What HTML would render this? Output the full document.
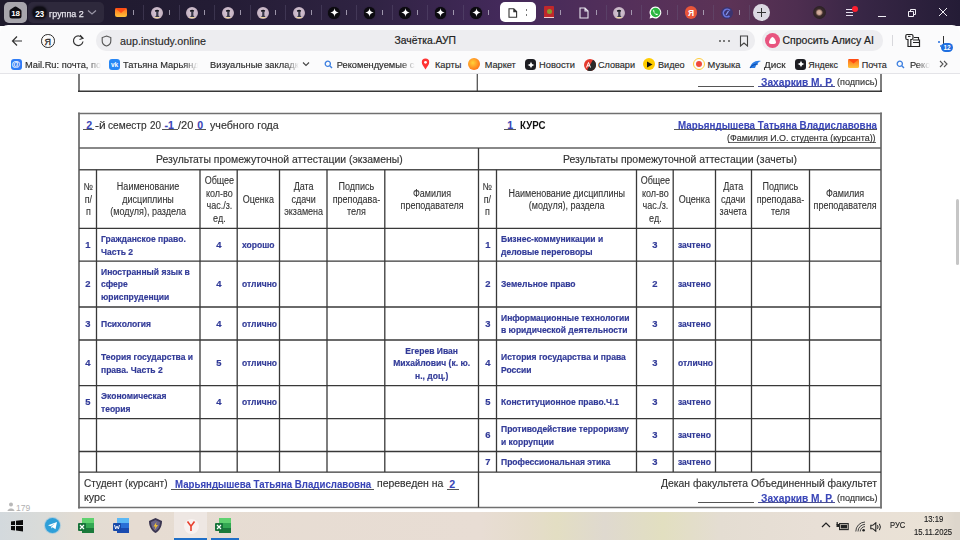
<!DOCTYPE html><html><head><meta charset="utf-8"><style>
*{margin:0;padding:0;box-sizing:border-box}
html,body{width:960px;height:540px;overflow:hidden;background:#fff;font-family:"Liberation Sans",sans-serif}
.t{position:absolute;white-space:nowrap}
.bk{-webkit-text-stroke:0.15px #333}
.r{position:absolute}
.c{position:absolute;display:flex;align-items:center;justify-content:center;text-align:center;color:#333;font-size:10px;line-height:12.6px;padding-top:2.4px;-webkit-text-stroke:0.1px #333}
.c>span{display:inline-block;transform:scaleX(0.9);white-space:nowrap}
.d{position:absolute;display:flex;align-items:center;color:#323b98;font-weight:bold;font-size:9.7px;line-height:12.65px;padding-top:1.6px;-webkit-text-stroke:0.2px #323b98}
.d>span{display:inline-block;transform:scaleX(0.88);transform-origin:0 50%;white-space:nowrap}
.d.cc>span{transform-origin:50% 50%;font-size:9.9px;transform:scaleX(0.95)}
.d.ee>span{font-size:9.7px;transform:scaleX(0.88)}
.u{text-decoration:underline;text-underline-offset:1.5px;text-decoration-thickness:1px}
svg{position:absolute}
</style></head><body>

<div class="r" style="left:0px;top:0px;width:960px;height:26px;background:linear-gradient(90deg,#1e1a2c 0%,#231c34 22%,#2f2342 38%,#43295a 52%,#55305a 66%,#5c3356 76%,#4e2e50 83%,#372645 90%,#241c36 100%);"></div>
<div class="r" style="left:4px;top:2px;width:23px;height:21px;background:#a7a5ac;border-radius:5px;"></div>
<svg style="left:9px;top:6px" width="13" height="13" viewBox="0 0 13 13"><path d="M6.5 0.6 Q7.3 0.6 8.2 1.3 L11.6 3.6 Q12.5 4.2 12.5 5.3 V10 Q12.5 12.5 10 12.5 H3 Q0.5 12.5 0.5 10 V5.3 Q0.5 4.2 1.4 3.6 L4.8 1.3 Q5.7 0.6 6.5 0.6Z" fill="#0d0c12"/></svg>
<div class="t" style="left:15.5px;top:10.33px;font-size:8px;line-height:8px;color:#fff;font-weight:bold;letter-spacing:-0.3px;transform:translateX(-50%);">18</div>
<div class="r" style="left:28px;top:2px;width:76px;height:21px;background:#2e293c;border-radius:5px;"></div>
<div class="r" style="left:33px;top:7px;width:13px;height:11px;border-radius:5px;background:#0f0e15;box-shadow:0 0 2px 1px #0f0e15"></div>
<div class="t" style="left:39.5px;top:10.07px;font-size:8.3px;line-height:8.3px;color:#fff;font-weight:bold;letter-spacing:-0.4px;transform:translateX(-50%);">23</div>
<div class="t" style="left:48.8px;top:8.80px;font-size:9.8px;line-height:9.8px;color:#e6e4ec;transform-origin:0 0;transform:scaleX(0.9119);-webkit-text-stroke:0.25px #e6e4ec;">группа 2</div>
<svg style="left:87px;top:9px" width="10" height="7" viewBox="0 0 10 7"><path d="M1 1.5 L5 5 L9 1.5" stroke="#9a96a6" stroke-width="1.2" fill="none"/></svg>
<div class="r" style="left:143px;top:5px;width:1px;height:15px;background:#6a6080;opacity:.35;"></div>
<div class="r" style="left:133px;top:10px;width:1.2px;height:5px;background:#b8b2c4;opacity:.8;"></div>
<div class="r" style="left:178.5px;top:5px;width:1px;height:15px;background:#6a6080;opacity:.35;"></div>
<div class="r" style="left:168.5px;top:10px;width:1.2px;height:5px;background:#b8b2c4;opacity:.8;"></div>
<div class="r" style="left:214px;top:5px;width:1px;height:15px;background:#6a6080;opacity:.35;"></div>
<div class="r" style="left:204px;top:10px;width:1.2px;height:5px;background:#b8b2c4;opacity:.8;"></div>
<div class="r" style="left:249.5px;top:5px;width:1px;height:15px;background:#6a6080;opacity:.35;"></div>
<div class="r" style="left:239.5px;top:10px;width:1.2px;height:5px;background:#b8b2c4;opacity:.8;"></div>
<div class="r" style="left:285px;top:5px;width:1px;height:15px;background:#6a6080;opacity:.35;"></div>
<div class="r" style="left:275px;top:10px;width:1.2px;height:5px;background:#b8b2c4;opacity:.8;"></div>
<div class="r" style="left:320.5px;top:5px;width:1px;height:15px;background:#6a6080;opacity:.35;"></div>
<div class="r" style="left:310.5px;top:10px;width:1.2px;height:5px;background:#b8b2c4;opacity:.8;"></div>
<div class="r" style="left:356px;top:5px;width:1px;height:15px;background:#6a6080;opacity:.35;"></div>
<div class="r" style="left:346px;top:10px;width:1.2px;height:5px;background:#b8b2c4;opacity:.8;"></div>
<div class="r" style="left:391.5px;top:5px;width:1px;height:15px;background:#6a6080;opacity:.35;"></div>
<div class="r" style="left:381.5px;top:10px;width:1.2px;height:5px;background:#b8b2c4;opacity:.8;"></div>
<div class="r" style="left:427px;top:5px;width:1px;height:15px;background:#6a6080;opacity:.35;"></div>
<div class="r" style="left:417px;top:10px;width:1.2px;height:5px;background:#b8b2c4;opacity:.8;"></div>
<div class="r" style="left:462.5px;top:5px;width:1px;height:15px;background:#6a6080;opacity:.35;"></div>
<div class="r" style="left:452.5px;top:10px;width:1.2px;height:5px;background:#b8b2c4;opacity:.8;"></div>
<div class="r" style="left:488px;top:10px;width:1.2px;height:5px;background:#b8b2c4;opacity:.8;"></div>
<div class="r" style="left:559.5px;top:10px;width:1.2px;height:5px;background:#b8b2c4;opacity:.8;"></div>
<div class="r" style="left:605.5px;top:5px;width:1px;height:15px;background:#6a6080;opacity:.35;"></div>
<div class="r" style="left:595.5px;top:10px;width:1.2px;height:5px;background:#b8b2c4;opacity:.8;"></div>
<div class="r" style="left:641px;top:5px;width:1px;height:15px;background:#6a6080;opacity:.35;"></div>
<div class="r" style="left:631px;top:10px;width:1.2px;height:5px;background:#b8b2c4;opacity:.8;"></div>
<div class="r" style="left:677px;top:5px;width:1px;height:15px;background:#6a6080;opacity:.35;"></div>
<div class="r" style="left:667px;top:10px;width:1.2px;height:5px;background:#b8b2c4;opacity:.8;"></div>
<div class="r" style="left:713px;top:5px;width:1px;height:15px;background:#6a6080;opacity:.35;"></div>
<div class="r" style="left:703px;top:10px;width:1.2px;height:5px;background:#b8b2c4;opacity:.8;"></div>
<div class="r" style="left:749px;top:5px;width:1px;height:15px;background:#6a6080;opacity:.35;"></div>
<div class="r" style="left:739px;top:10px;width:1.2px;height:5px;background:#b8b2c4;opacity:.8;"></div>
<div class="r" style="left:500px;top:2.3px;width:36px;height:19.7px;background:#ffffff;border-radius:5px;"></div>
<svg style="left:508px;top:8px" width="10" height="10" viewBox="0 0 10 10"><path d="M1 0.8 H5.8 L8.6 3.6 V9.2 H1 Z M5.8 0.8 V3.6 H8.6" stroke="#333" stroke-width="1.1" fill="none"/></svg>
<div class="r" style="left:525.8px;top:9px;width:1.2px;height:1.6px;background:#777;"></div>
<div class="r" style="left:525.8px;top:14px;width:1.2px;height:1.6px;background:#777;"></div>
<div class="r" style="left:115px;top:8px;width:12px;height:9px;background:linear-gradient(180deg,#ff6a1a,#ffc43b);border-radius:2px;"></div>
<svg style="left:115px;top:8px" width="12" height="9" viewBox="0 0 12 9"><path d="M0 0 L6 5 L12 0Z" fill="#ff4d14"/></svg>
<div class="r" style="left:150.5px;top:6.5px;width:12px;height:12px;border-radius:50%;background:radial-gradient(circle at 50% 45%,#d8c8d6 0,#c6b4c4 60%,#7a6070 100%)"></div>
<svg style="left:150.5px;top:6.5px" width="12" height="12" viewBox="0 0 12 12"><path d="M3.8 3.6 Q6 1.8 8.2 3.4 L7.4 5 Q6 4.3 4.6 5Z" fill="#15151c"/><path d="M5.2 4.8 H7.4 V8.5 L8.5 10 H4 L5.2 8.5Z" fill="#3a3a4a"/><path d="M3.3 10.6 H8.7" stroke="#f0d8a0" stroke-width="1.1"/></svg>
<div class="r" style="left:186px;top:6.5px;width:12px;height:12px;border-radius:50%;background:radial-gradient(circle at 50% 45%,#d8c8d6 0,#c6b4c4 60%,#7a6070 100%)"></div>
<svg style="left:186px;top:6.5px" width="12" height="12" viewBox="0 0 12 12"><path d="M3.8 3.6 Q6 1.8 8.2 3.4 L7.4 5 Q6 4.3 4.6 5Z" fill="#15151c"/><path d="M5.2 4.8 H7.4 V8.5 L8.5 10 H4 L5.2 8.5Z" fill="#3a3a4a"/><path d="M3.3 10.6 H8.7" stroke="#f0d8a0" stroke-width="1.1"/></svg>
<div class="r" style="left:221.5px;top:6.5px;width:12px;height:12px;border-radius:50%;background:radial-gradient(circle at 50% 45%,#d8c8d6 0,#c6b4c4 60%,#7a6070 100%)"></div>
<svg style="left:221.5px;top:6.5px" width="12" height="12" viewBox="0 0 12 12"><path d="M3.8 3.6 Q6 1.8 8.2 3.4 L7.4 5 Q6 4.3 4.6 5Z" fill="#15151c"/><path d="M5.2 4.8 H7.4 V8.5 L8.5 10 H4 L5.2 8.5Z" fill="#3a3a4a"/><path d="M3.3 10.6 H8.7" stroke="#f0d8a0" stroke-width="1.1"/></svg>
<div class="r" style="left:257px;top:6.5px;width:12px;height:12px;border-radius:50%;background:radial-gradient(circle at 50% 45%,#d8c8d6 0,#c6b4c4 60%,#7a6070 100%)"></div>
<svg style="left:257px;top:6.5px" width="12" height="12" viewBox="0 0 12 12"><path d="M3.8 3.6 Q6 1.8 8.2 3.4 L7.4 5 Q6 4.3 4.6 5Z" fill="#15151c"/><path d="M5.2 4.8 H7.4 V8.5 L8.5 10 H4 L5.2 8.5Z" fill="#3a3a4a"/><path d="M3.3 10.6 H8.7" stroke="#f0d8a0" stroke-width="1.1"/></svg>
<div class="r" style="left:292.5px;top:6.5px;width:12px;height:12px;border-radius:50%;background:radial-gradient(circle at 50% 45%,#d8c8d6 0,#c6b4c4 60%,#7a6070 100%)"></div>
<svg style="left:292.5px;top:6.5px" width="12" height="12" viewBox="0 0 12 12"><path d="M3.8 3.6 Q6 1.8 8.2 3.4 L7.4 5 Q6 4.3 4.6 5Z" fill="#15151c"/><path d="M5.2 4.8 H7.4 V8.5 L8.5 10 H4 L5.2 8.5Z" fill="#3a3a4a"/><path d="M3.3 10.6 H8.7" stroke="#f0d8a0" stroke-width="1.1"/></svg>
<div class="r" style="left:328.2px;top:7px;width:11.6px;height:11.6px;border-radius:50%;background:#0c0b10;box-shadow:0 0 1px #0c0b10"></div>
<svg style="left:329.5px;top:8.3px" width="9" height="9" viewBox="0 0 9 9"><path d="M4.5 0.3 Q5 4 8.7 4.5 Q5 5 4.5 8.7 Q4 5 0.3 4.5 Q4 4 4.5 0.3Z" fill="#fff"/></svg>
<div class="r" style="left:363.7px;top:7px;width:11.6px;height:11.6px;border-radius:50%;background:#0c0b10;box-shadow:0 0 1px #0c0b10"></div>
<svg style="left:365.0px;top:8.3px" width="9" height="9" viewBox="0 0 9 9"><path d="M4.5 0.3 Q5 4 8.7 4.5 Q5 5 4.5 8.7 Q4 5 0.3 4.5 Q4 4 4.5 0.3Z" fill="#fff"/></svg>
<div class="r" style="left:399.2px;top:7px;width:11.6px;height:11.6px;border-radius:50%;background:#0c0b10;box-shadow:0 0 1px #0c0b10"></div>
<svg style="left:400.5px;top:8.3px" width="9" height="9" viewBox="0 0 9 9"><path d="M4.5 0.3 Q5 4 8.7 4.5 Q5 5 4.5 8.7 Q4 5 0.3 4.5 Q4 4 4.5 0.3Z" fill="#fff"/></svg>
<div class="r" style="left:434.7px;top:7px;width:11.6px;height:11.6px;border-radius:50%;background:#0c0b10;box-shadow:0 0 1px #0c0b10"></div>
<svg style="left:436.0px;top:8.3px" width="9" height="9" viewBox="0 0 9 9"><path d="M4.5 0.3 Q5 4 8.7 4.5 Q5 5 4.5 8.7 Q4 5 0.3 4.5 Q4 4 4.5 0.3Z" fill="#fff"/></svg>
<div class="r" style="left:470.2px;top:7px;width:11.6px;height:11.6px;border-radius:50%;background:#0c0b10;box-shadow:0 0 1px #0c0b10"></div>
<svg style="left:471.5px;top:8.3px" width="9" height="9" viewBox="0 0 9 9"><path d="M4.5 0.3 Q5 4 8.7 4.5 Q5 5 4.5 8.7 Q4 5 0.3 4.5 Q4 4 4.5 0.3Z" fill="#fff"/></svg>
<div class="r" style="left:544px;top:6.3px;width:10px;height:11.5px;background:#c0282c;border-radius:1px;"></div>
<div class="r" style="left:546.5px;top:8.5px;width:5px;height:5px;background:#8a9a30;border-radius:50%;"></div>
<div class="r" style="left:544px;top:16.5px;width:10px;height:1.3px;background:#f0d0d0;"></div>
<svg style="left:578.5px;top:7px" width="10" height="12" viewBox="0 0 10 12"><path d="M1 1 H6 L9 4 V11 H1 Z M6 1 V4 H9" stroke="#e8e6ee" stroke-width="1.1" fill="none"/></svg>
<div class="r" style="left:613px;top:6.5px;width:12px;height:12px;border-radius:50%;background:radial-gradient(circle at 50% 45%,#d8c8d6 0,#c6b4c4 60%,#7a6070 100%)"></div>
<svg style="left:613px;top:6.5px" width="12" height="12" viewBox="0 0 12 12"><path d="M3.8 3.6 Q6 1.8 8.2 3.4 L7.4 5 Q6 4.3 4.6 5Z" fill="#15151c"/><path d="M5.2 4.8 H7.4 V8.5 L8.5 10 H4 L5.2 8.5Z" fill="#3a3a4a"/><path d="M3.3 10.6 H8.7" stroke="#f0d8a0" stroke-width="1.1"/></svg>
<svg style="left:648.5px;top:6px" width="13" height="13" viewBox="0 0 13 13"><path d="M6.5 0.6 A5.9 5.9 0 1 1 3.6 11.7 L0.6 12.4 L1.4 9.5 A5.9 5.9 0 0 1 6.5 0.6Z" fill="#fff"/><circle cx="6.5" cy="6.5" r="4.7" fill="#2bb741"/><path d="M4.3 3.8 Q3.8 6.8 7.2 8.9 Q8.6 9.5 9 8.3 L7.9 7.5 L7.2 8 Q5.8 7.2 5.1 5.9 L5.6 5.2 L4.9 3.9Z" fill="#fff"/></svg>
<div class="r" style="left:684.8px;top:6.2px;width:12.4px;height:12.4px;background:#e8553a;border-radius:50%;"></div>
<div class="t" style="left:691px;top:9.20px;font-size:8.5px;line-height:8.5px;color:#fff;font-weight:bold;transform:translateX(-50%);">Я</div>
<div class="r" style="left:721px;top:6.5px;width:12px;height:12px;background:#3c3470;border-radius:50%;"></div>
<svg style="left:721px;top:6.5px" width="12" height="12" viewBox="0 0 12 12"><path d="M9 3.5 A3.8 3.8 0 1 0 8.5 9" stroke="#6a78e0" stroke-width="1.6" fill="none"/><path d="M5 8 L7.5 4" stroke="#8a9af0" stroke-width="1.2"/></svg>
<div class="r" style="left:753px;top:4px;width:17px;height:17px;background:#dcd9e2;border-radius:50%;"></div>
<div class="r" style="left:757px;top:12px;width:9px;height:1.3px;background:#333;"></div>
<div class="r" style="left:760.8px;top:8px;width:1.3px;height:9px;background:#333;"></div>
<div class="r" style="left:812.5px;top:6px;width:13px;height:13px;background:radial-gradient(ellipse at 48% 50%,#d8b8a8 0,#c8a090 22%,#3a2a2a 40%,#2a2025 70%,#9a8a98 100%);border-radius:50%;"></div>
<div class="r" style="left:846px;top:9px;width:7px;height:1.2px;background:#e6e0ee;"></div>
<div class="r" style="left:846px;top:12px;width:7px;height:1.2px;background:#e6e0ee;"></div>
<div class="r" style="left:846px;top:15px;width:7px;height:1.2px;background:#e6e0ee;"></div>
<div class="r" style="left:852px;top:6px;width:6px;height:6px;background:#ff1f2f;border-radius:50%;"></div>
<div class="r" style="left:877.5px;top:15.5px;width:8px;height:1px;background:#f0eef4;"></div>
<svg style="left:907px;top:8px" width="10" height="10" viewBox="0 0 10 10"><path d="M1.5 3.5 H6.5 V8.5 H1.5 Z M3.5 3.5 V1.5 H8.5 V6.5 H6.5" stroke="#f0eef4" stroke-width="1" fill="none"/></svg>
<svg style="left:938px;top:7px" width="10" height="10" viewBox="0 0 10 10"><path d="M1 1 L9 9 M9 1 L1 9" stroke="#f0eef4" stroke-width="1" fill="none"/></svg>
<div class="r" style="left:0px;top:25px;width:960px;height:49px;background:#fbfbfc;border-radius:8px 8px 0 0;"></div>
<svg style="left:11px;top:35px" width="12" height="12" viewBox="0 0 12 12"><path d="M11 6 H1.5 M6 1.5 L1.5 6 L6 10.5" stroke="#333" stroke-width="1.2" fill="none"/></svg>
<div class="r" style="left:41px;top:34px;width:13.5px;height:13.5px;background:transparent;border-radius:50%;border:1.2px solid #2a2a2a;"></div>
<div class="t" style="left:47.8px;top:37.78px;font-size:9px;line-height:9px;color:#2a2a2a;transform:translateX(-50%);-webkit-text-stroke:0.3px #2a2a2a;">Я</div>
<svg style="left:72px;top:34px" width="13" height="13" viewBox="0 0 13 13"><path d="M10.5 4.5 A4.8 4.8 0 1 0 11 7.5" stroke="#333" stroke-width="1.2" fill="none"/><path d="M8 1.2 L11 4.3 L7.5 5.5" stroke="#333" stroke-width="1.2" fill="none"/></svg>
<div class="r" style="left:96px;top:30px;width:659px;height:21px;background:#ededf0;border-radius:10px;"></div>
<svg style="left:101px;top:35px" width="11" height="12" viewBox="0 0 11 12"><path d="M5.5 1 L9.8 2.6 V6 C9.8 8.5 7.8 10.3 5.5 11 C3.2 10.3 1.2 8.5 1.2 6 V2.6 Z" stroke="#555" stroke-width="1.1" fill="none"/></svg>
<div class="t" style="left:120px;top:35.70px;font-size:10.75px;line-height:10.75px;color:#2a2a2a;-webkit-text-stroke:0.15px #2a2a2a;">aup.instudy.online</div>
<div class="t" style="left:394.6px;top:36.06px;font-size:10.33px;line-height:10.33px;color:#222;-webkit-text-stroke:0.2px #222;">Зачётка.АУП</div>
<div class="r" style="left:719.0px;top:40px;width:2px;height:2px;background:#555;border-radius:50%;"></div>
<div class="r" style="left:723.3px;top:40px;width:2px;height:2px;background:#555;border-radius:50%;"></div>
<div class="r" style="left:727.6px;top:40px;width:2px;height:2px;background:#555;border-radius:50%;"></div>
<svg style="left:739px;top:35px" width="10" height="12" viewBox="0 0 10 12"><path d="M1.5 1 H8.5 V11 L5 8 L1.5 11 Z" stroke="#444" stroke-width="1.1" fill="none"/></svg>
<div class="r" style="left:762px;top:30px;width:121px;height:21px;background:#ededf0;border-radius:10px;"></div>
<div class="r" style="left:765px;top:33px;width:15px;height:15px;background:#e8547f;border-radius:50%;"></div>
<svg style="left:767px;top:35px" width="11" height="11" viewBox="0 0 11 11"><path d="M5.5 2 C7 2 9 6 9 7.5 C9 8.8 7.5 9 5.5 9 C3.5 9 2 8.8 2 7.5 C2 6 4 2 5.5 2Z" fill="#fff"/></svg>
<div class="t" style="left:782.5px;top:36.12px;font-size:10.49px;line-height:10.49px;color:#222;-webkit-text-stroke:0.2px #222;">Спросить Алису AI</div>
<div class="r" style="left:892px;top:35px;width:1px;height:11px;background:#d8d8dc;"></div>
<svg style="left:905px;top:33px" width="16" height="15" viewBox="0 0 16 15"><path d="M2 1.5 H6.5 Q8 1.5 8 3 V5 Q8 6.5 6.5 6.5 H5.8 V13.5 H3 V6.5 H2 Q0.8 6.5 0.8 5 V3 Q0.8 1.5 2 1.5Z" stroke="#222" stroke-width="1.2" fill="none"/><path d="M3 3.4 H5.5" stroke="#222" stroke-width="1.1"/><path d="M8 7 H14.5 V13.5 H6 M8 9.5 H14.5" stroke="#222" stroke-width="1.2" fill="none"/><path d="M9 4.5 H13.5 V7" stroke="#222" stroke-width="1.1" fill="none"/></svg>
<div class="r" style="left:942.5px;top:36px;width:1.2px;height:8px;background:#333;"></div>
<div class="r" style="left:941px;top:43px;width:12px;height:9px;background:#1f6fe0;border-radius:5px;"></div>
<div class="t" style="left:947px;top:45.30px;font-size:6.5px;line-height:6.5px;color:#fff;font-weight:bold;transform:translateX(-50%);">12</div>
<div class="r" style="left:938px;top:41px;width:1.5px;height:1.5px;background:#3a7be0;border-radius:50%;"></div>
<div class="r" style="left:940px;top:45px;width:1.5px;height:1.5px;background:#3a7be0;border-radius:50%;"></div>
<div class="r" style="left:0px;top:73px;width:960px;height:1px;background:#e4e4e8;"></div>
<div class="r" style="left:10.5px;top:58.5px;width:11px;height:11.5px;background:#2f7cf6;border-radius:3px;"></div>
<div class="t" style="left:16px;top:60.18px;font-size:9px;line-height:9px;color:#fff;font-weight:bold;transform:translateX(-50%);">@</div>
<div class="r" style="left:25px;top:56px;width:76px;height:17px;overflow:hidden;-webkit-mask-image:linear-gradient(90deg,#000 0,#000 62px,transparent 76px)"><div class="t" style="left:0;top:5.03px;font-size:9.3px;line-height:9.3px;color:#2a2a2a;-webkit-text-stroke:0.15px #2a2a2a">Mail.Ru: почта, поиск</div></div>
<div class="r" style="left:109px;top:58.5px;width:11px;height:11.5px;background:#2787f5;border-radius:3px;"></div>
<div class="t" style="left:114.5px;top:62.30px;font-size:6.5px;line-height:6.5px;color:#fff;font-weight:bold;transform:translateX(-50%);">vk</div>
<div class="r" style="left:123px;top:56px;width:75px;height:17px;overflow:hidden;-webkit-mask-image:linear-gradient(90deg,#000 0,#000 61px,transparent 75px)"><div class="t" style="left:0;top:5.03px;font-size:9.3px;line-height:9.3px;color:#2a2a2a;-webkit-text-stroke:0.15px #2a2a2a">Татьяна Марьяндышева</div></div>
<div class="r" style="left:210px;top:56px;width:89px;height:17px;overflow:hidden;-webkit-mask-image:linear-gradient(90deg,#000 0,#000 75px,transparent 89px)"><div class="t" style="left:0;top:5.03px;font-size:9.3px;line-height:9.3px;color:#2a2a2a;-webkit-text-stroke:0.15px #2a2a2a">Визуальные закладки</div></div>
<svg style="left:302px;top:61px" width="8" height="6" viewBox="0 0 8 6"><path d="M1 1.5 L4 4.5 L7 1.5" stroke="#444" stroke-width="1.1" fill="none"/></svg>
<svg style="left:324px;top:60px" width="9" height="9" viewBox="0 0 9 9"><circle cx="3.8" cy="3.8" r="2.6" stroke="#3d7fe0" stroke-width="1.3" fill="none"/><path d="M5.8 5.8 L8 8" stroke="#3d7fe0" stroke-width="1.4"/></svg>
<div class="r" style="left:336.7px;top:56px;width:78px;height:17px;overflow:hidden;-webkit-mask-image:linear-gradient(90deg,#000 0,#000 64px,transparent 78px)"><div class="t" style="left:0;top:5.03px;font-size:9.3px;line-height:9.3px;color:#2a2a2a;-webkit-text-stroke:0.15px #2a2a2a">Рекомендуемые сайты</div></div>
<svg style="left:421px;top:58px" width="9" height="12" viewBox="0 0 9 12"><path d="M4.5 11.5 C2.5 8.5 0.8 6.5 0.8 4.3 A3.7 3.7 0 0 1 8.2 4.3 C8.2 6.5 6.5 8.5 4.5 11.5Z" fill="#f33"/><circle cx="4.5" cy="4.3" r="1.4" fill="#fff"/></svg>
<div class="t" style="left:435px;top:61.09px;font-size:9.23px;line-height:9.23px;color:#2a2a2a;-webkit-text-stroke:0.15px #2a2a2a;">Карты</div>
<div class="r" style="left:468px;top:58px;width:12px;height:12px;background:radial-gradient(circle at 40% 40%,#ffd23a,#ff7a1a 70%);border-radius:50%;"></div>
<div class="t" style="left:484.7px;top:61.13px;font-size:9.18px;line-height:9.18px;color:#2a2a2a;-webkit-text-stroke:0.15px #2a2a2a;">Маркет</div>
<div class="r" style="left:525px;top:59.3px;width:11px;height:10.5px;background:#1d1d22;border-radius:3.5px;"></div>
<svg style="left:526.5px;top:60.5px" width="8" height="8" viewBox="0 0 8 8"><path d="M4 0.5 Q4.5 3.5 7.5 4 Q4.5 4.5 4 7.5 Q3.5 4.5 0.5 4 Q3.5 3.5 4 0.5Z" fill="#fff"/></svg>
<div class="t" style="left:539px;top:61.03px;font-size:9.3px;line-height:9.3px;color:#2a2a2a;-webkit-text-stroke:0.15px #2a2a2a;">Новости</div>
<div class="r" style="left:583.5px;top:58.5px;width:12px;height:12px;background:#e53a2e;border-radius:50%;"></div>
<svg style="left:583.5px;top:58.5px" width="12" height="12" viewBox="0 0 12 12"><path d="M12 6 A6 6 0 0 1 3 11.2 L9 0.8 A6 6 0 0 1 12 6Z" fill="#2a2a2a"/><path d="M2.5 8.5 L4.5 3.5 L6.5 8.5 M3.3 6.8 H5.7" stroke="#fff" stroke-width="1" fill="none"/></svg>
<div class="t" style="left:598px;top:61.20px;font-size:9.1px;line-height:9.1px;color:#2a2a2a;-webkit-text-stroke:0.15px #2a2a2a;">Словари</div>
<div class="r" style="left:643px;top:58px;width:12px;height:12px;background:#ffcc00;border-radius:50%;"></div>
<svg style="left:646px;top:61px" width="7" height="7" viewBox="0 0 7 7"><path d="M1 0.5 L6.5 3.5 L1 6.5Z" fill="#111"/></svg>
<div class="t" style="left:658px;top:61.16px;font-size:9.14px;line-height:9.14px;color:#2a2a2a;-webkit-text-stroke:0.15px #2a2a2a;">Видео</div>
<div class="r" style="left:693px;top:58px;width:12px;height:12px;background:transparent;border-radius:50%;border:1.5px solid #ffcc3a;"></div>
<div class="r" style="left:696px;top:61px;width:6px;height:6px;background:#f04a3a;border-radius:50%;"></div>
<div class="t" style="left:707.5px;top:61.00px;font-size:9.33px;line-height:9.33px;color:#2a2a2a;-webkit-text-stroke:0.15px #2a2a2a;">Музыка</div>
<svg style="left:749px;top:59px" width="13" height="10" viewBox="0 0 13 10"><path d="M1 9 C2 4 6 1 12 2 C9 3 7 6 6 9 Z" fill="#2a7be4"/><path d="M1 9 C3 6 6 5 9 5" stroke="#0b4fb0" stroke-width="1.2" fill="none"/></svg>
<div class="t" style="left:764px;top:61.03px;font-size:9.3px;line-height:9.3px;color:#2a2a2a;transform-origin:0 0;transform:scaleX(1.0637);-webkit-text-stroke:0.15px #2a2a2a;">Диск</div>
<div class="r" style="left:795px;top:58.5px;width:11px;height:11px;background:#1d1d22;border-radius:3px;"></div>
<svg style="left:796.5px;top:60px" width="8" height="8" viewBox="0 0 8 8"><path d="M4 0.5 Q4.5 3.5 7.5 4 Q4.5 4.5 4 7.5 Q3.5 4.5 0.5 4 Q3.5 3.5 4 0.5Z" fill="#fff"/></svg>
<div class="t" style="left:808.3px;top:61.43px;font-size:8.83px;line-height:8.83px;color:#2a2a2a;-webkit-text-stroke:0.15px #2a2a2a;">Яндекс</div>
<div class="r" style="left:848px;top:59px;width:11px;height:9px;background:linear-gradient(180deg,#ff6a1a,#ffc43b);border-radius:1.5px;"></div>
<svg style="left:848px;top:59px" width="11" height="9" viewBox="0 0 11 9"><path d="M0 0 L5.5 4.5 L11 0Z" fill="#ff4d14"/></svg>
<div class="t" style="left:861.7px;top:61.28px;font-size:9.0px;line-height:9.0px;color:#2a2a2a;-webkit-text-stroke:0.15px #2a2a2a;">Почта</div>
<svg style="left:896px;top:60px" width="9" height="9" viewBox="0 0 9 9"><circle cx="3.8" cy="3.8" r="2.6" stroke="#3d7fe0" stroke-width="1.3" fill="none"/><path d="M5.8 5.8 L8 8" stroke="#3d7fe0" stroke-width="1.4"/></svg>
<div class="r" style="left:910px;top:56px;width:20px;height:17px;overflow:hidden;-webkit-mask-image:linear-gradient(90deg,#000 0,#000 6px,transparent 20px)"><div class="t" style="left:0;top:5.03px;font-size:9.3px;line-height:9.3px;color:#2a2a2a;-webkit-text-stroke:0.15px #2a2a2a">Рекомендуемые</div></div>
<svg style="left:939px;top:60px" width="9" height="8" viewBox="0 0 9 8"><path d="M1 1 L4 4 L1 7 M5 1 L8 4 L5 7" stroke="#555" stroke-width="1.1" fill="none"/></svg>
<div class="r" style="left:0px;top:74px;width:960px;height:438px;background:#ffffff;"></div>
<div class="r" style="left:697.8px;top:86px;width:56.200000000000045px;height:1px;background:#555"></div>
<div class="r" style="left:758px;top:86.3px;width:77px;height:1px;background:#4a4f90"></div>
<div class="t" style="left:760.8px;top:76.83px;font-size:10.6px;line-height:10.6px;color:#3a46b8;transform-origin:0 0;transform:scaleX(0.9624);font-weight:bold;-webkit-text-stroke:0.1px #3a46b8;">Захаркив М. Р.</div>
<div class="t" style="left:836.5px;top:78.13px;font-size:9.06px;line-height:9.06px;color:#333;transform-origin:0 0;transform:scaleX(1.0054);-webkit-text-stroke:0.15px #333;">(подпись)</div>
<svg style="left:0;top:0" width="960" height="540" viewBox="0 0 960 540"><line x1="79" y1="74" x2="79" y2="92" stroke="#707070" stroke-width="1.8"/><line x1="881" y1="74" x2="881" y2="92" stroke="#707070" stroke-width="1.8"/><line x1="477.3" y1="74" x2="477.3" y2="91.3" stroke="#555" stroke-width="1.3"/><line x1="78" y1="91.3" x2="882" y2="91.3" stroke="#383838" stroke-width="1.4"/><line x1="78.1" y1="113.5" x2="881.9" y2="113.5" stroke="#707070" stroke-width="1.7"/><line x1="78.1" y1="507.5" x2="881.9" y2="507.5" stroke="#707070" stroke-width="1.7"/><line x1="79" y1="112.6" x2="79" y2="508.4" stroke="#707070" stroke-width="1.8"/><line x1="881" y1="112.6" x2="881" y2="508.4" stroke="#707070" stroke-width="1.8"/><line x1="79" y1="148" x2="881" y2="148" stroke="#606060" stroke-width="1.6"/><line x1="79" y1="169.8" x2="881" y2="169.8" stroke="#505050" stroke-width="1.6"/><line x1="79" y1="228.4" x2="881" y2="228.4" stroke="#383838" stroke-width="1.3"/><line x1="79" y1="261.2" x2="881" y2="261.2" stroke="#383838" stroke-width="1.3"/><line x1="79" y1="307.0" x2="881" y2="307.0" stroke="#383838" stroke-width="1.3"/><line x1="79" y1="340.0" x2="881" y2="340.0" stroke="#383838" stroke-width="1.3"/><line x1="79" y1="385.7" x2="881" y2="385.7" stroke="#383838" stroke-width="1.3"/><line x1="79" y1="418.6" x2="881" y2="418.6" stroke="#383838" stroke-width="1.3"/><line x1="79" y1="451.5" x2="881" y2="451.5" stroke="#383838" stroke-width="1.3"/><line x1="79" y1="472.1" x2="881" y2="472.1" stroke="#383838" stroke-width="1.3"/><line x1="478.5" y1="148" x2="478.5" y2="507.5" stroke="#383838" stroke-width="1.3"/><line x1="96.5" y1="169.8" x2="96.5" y2="472.1" stroke="#383838" stroke-width="1.3"/><line x1="200.0" y1="169.8" x2="200.0" y2="472.1" stroke="#383838" stroke-width="1.3"/><line x1="237.2" y1="169.8" x2="237.2" y2="472.1" stroke="#383838" stroke-width="1.3"/><line x1="279.5" y1="169.8" x2="279.5" y2="472.1" stroke="#383838" stroke-width="1.3"/><line x1="327.0" y1="169.8" x2="327.0" y2="472.1" stroke="#383838" stroke-width="1.3"/><line x1="384.8" y1="169.8" x2="384.8" y2="472.1" stroke="#383838" stroke-width="1.3"/><line x1="496.5" y1="169.8" x2="496.5" y2="472.1" stroke="#383838" stroke-width="1.3"/><line x1="636.5" y1="169.8" x2="636.5" y2="472.1" stroke="#383838" stroke-width="1.3"/><line x1="673.2" y1="169.8" x2="673.2" y2="472.1" stroke="#383838" stroke-width="1.3"/><line x1="715.5" y1="169.8" x2="715.5" y2="472.1" stroke="#383838" stroke-width="1.3"/><line x1="751.5" y1="169.8" x2="751.5" y2="472.1" stroke="#383838" stroke-width="1.3"/><line x1="809.5" y1="169.8" x2="809.5" y2="472.1" stroke="#383838" stroke-width="1.3"/></svg>
<div class="r" style="left:83.25px;top:129.3px;width:10.75px;height:1px;background:#555"></div>
<div class="t" style="left:86.3px;top:120.43px;font-size:10.6px;line-height:10.6px;color:#3a46b8;font-weight:bold;-webkit-text-stroke:0.1px #3a46b8;">2</div>
<div class="t" style="left:95.3px;top:120.68px;font-size:10.3px;line-height:10.3px;color:#333;transform-origin:0 0;transform:scaleX(1.1651);-webkit-text-stroke:0.15px #333;">-й</div>
<div class="t" style="left:107.6px;top:120.68px;font-size:10.3px;line-height:10.3px;color:#333;transform-origin:0 0;transform:scaleX(0.9826);-webkit-text-stroke:0.15px #333;">семестр</div>
<div class="t" style="left:149.8px;top:120.68px;font-size:10.3px;line-height:10.3px;color:#333;transform-origin:0 0;transform:scaleX(0.9601);-webkit-text-stroke:0.15px #333;">20</div>
<div class="r" style="left:162px;top:129.3px;width:16px;height:1px;background:#555"></div>
<div class="t" style="left:164.6px;top:120.43px;font-size:10.6px;line-height:10.6px;color:#3a46b8;font-weight:bold;-webkit-text-stroke:0.1px #3a46b8;">-1</div>
<div class="t" style="left:178.4px;top:120.68px;font-size:10.3px;line-height:10.3px;color:#333;transform-origin:0 0;transform:scaleX(1.0755);-webkit-text-stroke:0.15px #333;">/20</div>
<div class="r" style="left:195px;top:129.3px;width:11px;height:1px;background:#555"></div>
<div class="t" style="left:197.3px;top:120.43px;font-size:10.6px;line-height:10.6px;color:#3a46b8;font-weight:bold;-webkit-text-stroke:0.1px #3a46b8;">0</div>
<div class="t" style="left:209.8px;top:120.68px;font-size:10.3px;line-height:10.3px;color:#333;transform-origin:0 0;transform:scaleX(1.0371);-webkit-text-stroke:0.15px #333;">учебного года</div>
<div class="r" style="left:504.4px;top:129.3px;width:11.600000000000023px;height:1px;background:#555"></div>
<div class="t" style="left:507.3px;top:120.43px;font-size:10.6px;line-height:10.6px;color:#3a46b8;font-weight:bold;-webkit-text-stroke:0.1px #3a46b8;">1</div>
<div class="t" style="left:519.8px;top:120.77px;font-size:10.2px;line-height:10.2px;color:#111;transform-origin:0 0;transform:scaleX(0.9536);font-weight:bold;">КУРС</div>
<div class="r" style="left:674px;top:129.3px;width:203px;height:1px;background:#555"></div>
<div class="t" style="left:677.5px;top:119.51px;font-size:10.5px;line-height:10.5px;color:#3a46b8;transform-origin:0 0;transform:scaleX(0.9339);font-weight:bold;-webkit-text-stroke:0.1px #3a46b8;">Марьяндышева Татьяна Владиславовна</div>
<div class="r" style="left:727.5px;top:142.3px;width:148.5px;height:1px;background:#666"></div>
<div class="t" style="left:727.3px;top:134.27px;font-size:8.9px;line-height:8.9px;color:#333;transform-origin:0 0;transform:scaleX(1.0025);-webkit-text-stroke:0.15px #333;">(Фамилия И.О. студента (курсанта))</div>
<div class="t" style="left:155.6px;top:154.98px;font-size:10.42px;line-height:10.42px;color:#333;transform-origin:0 0;transform:scaleX(1.0011);-webkit-text-stroke:0.15px #333;">Результаты промежуточной аттестации (экзамены)</div>
<div class="t" style="left:562.6px;top:154.98px;font-size:10.42px;line-height:10.42px;color:#333;transform-origin:0 0;transform:scaleX(1.0032);-webkit-text-stroke:0.15px #333;">Результаты промежуточной аттестации (зачеты)</div>
<div class="c" style="left:80px;top:170px;width:16px;height:58px;"><span>№<br>п/<br>п</span></div>
<div class="c" style="left:97px;top:170px;width:103px;height:58px;"><span>Наименование<br>дисциплины<br>(модуля), раздела</span></div>
<div class="c" style="left:201px;top:170px;width:36px;height:58px;"><span>Общее<br>кол-во<br>час./з.<br>ед.</span></div>
<div class="c" style="left:238px;top:170px;width:41px;height:58px;"><span>Оценка</span></div>
<div class="c" style="left:280px;top:170px;width:47px;height:58px;"><span>Дата<br>сдачи<br>экзамена</span></div>
<div class="c" style="left:328px;top:170px;width:57px;height:58px;"><span>Подпись<br>преподава-<br>теля</span></div>
<div class="c" style="left:386px;top:170px;width:92px;height:58px;"><span>Фамилия<br>преподавателя</span></div>
<div class="c" style="left:479px;top:170px;width:17px;height:58px;"><span>№<br>п/<br>п</span></div>
<div class="c" style="left:497px;top:170px;width:139px;height:58px;"><span>Наименование дисциплины<br>(модуля), раздела</span></div>
<div class="c" style="left:637px;top:170px;width:36px;height:58px;"><span>Общее<br>кол-во<br>час./з.<br>ед.</span></div>
<div class="c" style="left:674px;top:170px;width:41px;height:58px;"><span>Оценка</span></div>
<div class="c" style="left:716px;top:170px;width:35px;height:58px;"><span>Дата<br>сдачи<br>зачета</span></div>
<div class="c" style="left:752px;top:170px;width:57px;height:58px;"><span>Подпись<br>преподава-<br>теля</span></div>
<div class="c" style="left:810px;top:170px;width:71px;height:58px;"><span>Фамилия<br>преподавателя</span></div>
<div class="d cc" style="left:80px;top:229px;width:16px;height:32px;justify-content:center;"><span>1</span></div>
<div class="d" style="left:97px;top:229px;width:103px;height:32px;padding-left:3.6px;"><span>Гражданское право.<br>Часть 2</span></div>
<div class="d cc" style="left:201px;top:229px;width:36px;height:32px;justify-content:center;"><span>4</span></div>
<div class="d" style="left:238px;top:229px;width:41px;height:32px;padding-left:4px;"><span>хорошо</span></div>
<div class="d cc" style="left:479px;top:229px;width:17px;height:32px;justify-content:center;"><span>1</span></div>
<div class="d" style="left:497px;top:229px;width:139px;height:32px;padding-left:4px;"><span>Бизнес-коммуникации и<br>деловые переговоры</span></div>
<div class="d cc" style="left:637px;top:229px;width:36px;height:32px;justify-content:center;"><span>3</span></div>
<div class="d" style="left:674px;top:229px;width:41px;height:32px;padding-left:3.5px;"><span>зачтено</span></div>
<div class="d cc" style="left:80px;top:262px;width:16px;height:44px;justify-content:center;"><span>2</span></div>
<div class="d" style="left:97px;top:262px;width:103px;height:44px;padding-left:3.6px;"><span>Иностранный язык в<br>сфере<br>юриспруденции</span></div>
<div class="d cc" style="left:201px;top:262px;width:36px;height:44px;justify-content:center;"><span>4</span></div>
<div class="d" style="left:238px;top:262px;width:41px;height:44px;padding-left:4px;"><span>отлично</span></div>
<div class="d cc" style="left:479px;top:262px;width:17px;height:44px;justify-content:center;"><span>2</span></div>
<div class="d" style="left:497px;top:262px;width:139px;height:44px;padding-left:4px;"><span>Земельное право</span></div>
<div class="d cc" style="left:637px;top:262px;width:36px;height:44px;justify-content:center;"><span>2</span></div>
<div class="d" style="left:674px;top:262px;width:41px;height:44px;padding-left:3.5px;"><span>зачтено</span></div>
<div class="d cc" style="left:80px;top:307px;width:16px;height:33px;justify-content:center;"><span>3</span></div>
<div class="d" style="left:97px;top:307px;width:103px;height:33px;padding-left:3.6px;"><span>Психология</span></div>
<div class="d cc" style="left:201px;top:307px;width:36px;height:33px;justify-content:center;"><span>4</span></div>
<div class="d" style="left:238px;top:307px;width:41px;height:33px;padding-left:4px;"><span>отлично</span></div>
<div class="d cc" style="left:479px;top:307px;width:17px;height:33px;justify-content:center;"><span>3</span></div>
<div class="d" style="left:497px;top:307px;width:139px;height:33px;padding-left:4px;"><span>Информационные технологии<br>в юридической деятельности</span></div>
<div class="d cc" style="left:637px;top:307px;width:36px;height:33px;justify-content:center;"><span>3</span></div>
<div class="d" style="left:674px;top:307px;width:41px;height:33px;padding-left:3.5px;"><span>зачтено</span></div>
<div class="d cc" style="left:80px;top:341px;width:16px;height:44px;justify-content:center;"><span>4</span></div>
<div class="d" style="left:97px;top:341px;width:103px;height:44px;padding-left:3.6px;"><span>Теория государства и<br>права. Часть 2</span></div>
<div class="d cc" style="left:201px;top:341px;width:36px;height:44px;justify-content:center;"><span>5</span></div>
<div class="d" style="left:238px;top:341px;width:41px;height:44px;padding-left:4px;"><span>отлично</span></div>
<div class="d cc ee" style="left:386px;top:341px;width:92px;height:44px;justify-content:center;text-align:center;"><span>Егерев Иван<br>Михайлович (к. ю.<br>н., доц.)</span></div>
<div class="d cc" style="left:479px;top:341px;width:17px;height:44px;justify-content:center;"><span>4</span></div>
<div class="d" style="left:497px;top:341px;width:139px;height:44px;padding-left:4px;"><span>История государства и права<br>России</span></div>
<div class="d cc" style="left:637px;top:341px;width:36px;height:44px;justify-content:center;"><span>3</span></div>
<div class="d" style="left:674px;top:341px;width:41px;height:44px;padding-left:3.5px;"><span>отлично</span></div>
<div class="d cc" style="left:80px;top:386px;width:16px;height:32px;justify-content:center;"><span>5</span></div>
<div class="d" style="left:97px;top:386px;width:103px;height:32px;padding-left:3.6px;"><span>Экономическая<br>теория</span></div>
<div class="d cc" style="left:201px;top:386px;width:36px;height:32px;justify-content:center;"><span>4</span></div>
<div class="d" style="left:238px;top:386px;width:41px;height:32px;padding-left:4px;"><span>отлично</span></div>
<div class="d cc" style="left:479px;top:386px;width:17px;height:32px;justify-content:center;"><span>5</span></div>
<div class="d" style="left:497px;top:386px;width:139px;height:32px;padding-left:4px;"><span>Конституционное право.Ч.1</span></div>
<div class="d cc" style="left:637px;top:386px;width:36px;height:32px;justify-content:center;"><span>3</span></div>
<div class="d" style="left:674px;top:386px;width:41px;height:32px;padding-left:3.5px;"><span>зачтено</span></div>
<div class="d cc" style="left:479px;top:419px;width:17px;height:32px;justify-content:center;"><span>6</span></div>
<div class="d" style="left:497px;top:419px;width:139px;height:32px;padding-left:4px;"><span>Противодействие терроризму<br>и коррупции</span></div>
<div class="d cc" style="left:637px;top:419px;width:36px;height:32px;justify-content:center;"><span>3</span></div>
<div class="d" style="left:674px;top:419px;width:41px;height:32px;padding-left:3.5px;"><span>зачтено</span></div>
<div class="d cc" style="left:479px;top:452px;width:17px;height:20px;justify-content:center;"><span>7</span></div>
<div class="d" style="left:497px;top:452px;width:139px;height:20px;padding-left:4px;"><span>Профессиональная этика</span></div>
<div class="d cc" style="left:637px;top:452px;width:36px;height:20px;justify-content:center;"><span>3</span></div>
<div class="d" style="left:674px;top:452px;width:41px;height:20px;padding-left:3.5px;"><span>зачтено</span></div>
<div class="t" style="left:83.6px;top:479.17px;font-size:10.2px;line-height:10.2px;color:#333;transform-origin:0 0;transform:scaleX(0.9860);-webkit-text-stroke:0.15px #333;">Студент (курсант)</div>
<div class="r" style="left:171px;top:488.6px;width:202.75px;height:1px;background:#555"></div>
<div class="t" style="left:174.6px;top:478.91px;font-size:10.5px;line-height:10.5px;color:#3a46b8;transform-origin:0 0;transform:scaleX(0.9207);font-weight:bold;-webkit-text-stroke:0.1px #3a46b8;">Марьяндышева Татьяна Владиславовна</div>
<div class="t" style="left:377.3px;top:479.17px;font-size:10.2px;line-height:10.2px;color:#333;transform-origin:0 0;transform:scaleX(1.0264);-webkit-text-stroke:0.15px #333;">переведен на</div>
<div class="r" style="left:446.7px;top:488.6px;width:12.050000000000011px;height:1px;background:#555"></div>
<div class="t" style="left:449.3px;top:478.83px;font-size:10.6px;line-height:10.6px;color:#3a46b8;font-weight:bold;-webkit-text-stroke:0.1px #3a46b8;">2</div>
<div class="t" style="left:83.6px;top:493.17px;font-size:10.2px;line-height:10.2px;color:#333;transform-origin:0 0;transform:scaleX(1.0523);-webkit-text-stroke:0.15px #333;">курс</div>
<div class="t" style="left:661.2px;top:479.03px;font-size:10.36px;line-height:10.36px;color:#333;transform-origin:0 0;transform:scaleX(1.0020);-webkit-text-stroke:0.15px #333;">Декан факультета Объединенный факультет</div>
<div class="r" style="left:697.8px;top:502px;width:56.200000000000045px;height:1px;background:#555"></div>
<div class="r" style="left:758px;top:502.3px;width:77px;height:1px;background:#4a4f90"></div>
<div class="t" style="left:760.8px;top:492.83px;font-size:10.6px;line-height:10.6px;color:#3a46b8;transform-origin:0 0;transform:scaleX(0.9624);font-weight:bold;-webkit-text-stroke:0.1px #3a46b8;">Захаркив М. Р.</div>
<div class="t" style="left:836.5px;top:494.13px;font-size:9.06px;line-height:9.06px;color:#333;transform-origin:0 0;transform:scaleX(1.0054);-webkit-text-stroke:0.15px #333;">(подпись)</div>
<svg style="left:7px;top:502px" width="8" height="9" viewBox="0 0 8 9"><circle cx="4" cy="2.5" r="2" fill="#b8b8b8"/><path d="M0.5 9 C0.5 5.5 7.5 5.5 7.5 9Z" fill="#b8b8b8"/></svg>
<div class="t" style="left:16px;top:503.60px;font-size:8.5px;line-height:8.5px;color:#b0b0b0;">179</div>
<div class="r" style="left:956px;top:198.5px;width:3px;height:66px;background:#c6c6c6;border-radius:2px;"></div>
<div class="r" style="left:0px;top:512px;width:960px;height:28px;background:linear-gradient(90deg,#d3d9dd 0%,#d9dbd9 4%,#e2dcd3 8%,#e6dcd2 14%,#e8ddd4 50%,#e5dccb 55%,#e3dec3 58%,#dfd9cf 63%,#e2dfc0 69%,#e4ddd2 75%,#e8dfd6 85%,#eae2d6 97%,#ddd6cc 99.5%);"></div>
<svg style="left:11px;top:520px" width="12" height="12" viewBox="0 0 12 12"><path d="M0 1.4 L4 0.9 V5 H0Z M5 0.8 L12 0 V5 H5Z M0 6 H4 V10.4 L0 9.9Z M5 6 H12 V11.4 L5 10.6Z" fill="#0a0a0a"/></svg>
<div class="r" style="left:45px;top:518px;width:15px;height:15px;background:#2e9fd8;border-radius:50%;box-shadow:0 0 0 1px rgba(120,190,230,.5);"></div>
<svg style="left:47px;top:521px" width="11" height="9" viewBox="0 0 11 9"><path d="M1 4.3 L10 1 L8.5 8.3 L5.5 6.3 L4.3 7.6 L4.3 5.6 L8.3 2.3 L3.5 5.3Z" fill="#fff"/></svg>
<svg style="left:78px;top:518px" width="16" height="15" viewBox="0 0 16 15"><rect x="4" y="0" width="12" height="15" rx="1.5" fill="#33a852"/><rect x="4" y="0" width="12" height="5" fill="#5fd16f"/><rect x="4" y="10" width="12" height="5" fill="#1a7a3a"/><rect x="0" y="5" width="8" height="8" rx="1" fill="#17733a"/><path d="M2 7 L6 11 M6 7 L2 11" stroke="#fff" stroke-width="1.2"/></svg>
<svg style="left:113px;top:518px" width="16" height="15" viewBox="0 0 16 15"><rect x="4" y="0" width="12" height="15" rx="1.5" fill="#2a6fd6"/><rect x="4" y="0" width="12" height="5" fill="#5bb8f5"/><rect x="4" y="10" width="12" height="5" fill="#1a4bb0"/><rect x="0" y="5" width="8" height="8" rx="1" fill="#1849a8"/><path d="M1.5 7 L2.7 11 L4 8 L5.3 11 L6.5 7" stroke="#fff" stroke-width="0.9" fill="none"/></svg>
<svg style="left:147px;top:517px" width="17" height="17" viewBox="0 0 17 17"><path d="M8.5 1 L15 4 C15 10 12 14 8.5 16 C5 14 2 10 2 4Z" fill="#3a3550"/><path d="M8.5 3 L13 5 C13 9.5 11 12.5 8.5 14 C6 12.5 4 9.5 4 5Z" fill="#6a6488"/><path d="M9.5 5 L6.5 9.5 H8.5 L7.5 13 L11 8 H9Z" fill="#f2c230"/></svg>
<div class="r" style="left:174px;top:512px;width:33px;height:28px;background:#eee7e3;"></div>
<div class="r" style="left:174px;top:538.3px;width:33px;height:1.7px;background:#1f6fc8;"></div>
<div class="r" style="left:183.5px;top:518.5px;width:15px;height:15px;background:#f8f2f0;border-radius:50%;"></div>
<svg style="left:185px;top:520px" width="12" height="12" viewBox="0 0 12 12"><path d="M2.5 1.5 L6 6.2 L9.5 1.5 M6 6.2 V11" stroke="#e8402e" stroke-width="1.6" fill="none"/></svg>
<svg style="left:215px;top:518px" width="16" height="15" viewBox="0 0 16 15"><rect x="4" y="0" width="12" height="15" rx="1.5" fill="#33a852"/><rect x="4" y="0" width="12" height="5" fill="#5fd16f"/><rect x="4" y="10" width="12" height="5" fill="#1a7a3a"/><rect x="0" y="5" width="8" height="8" rx="1" fill="#17733a"/><path d="M2 7 L6 11 M6 7 L2 11" stroke="#fff" stroke-width="1.2"/></svg>
<div class="r" style="left:211px;top:538.3px;width:27.5px;height:1.7px;background:#1f6fc8;"></div>
<svg style="left:821px;top:522px" width="10" height="6" viewBox="0 0 10 6"><path d="M1 5 L5 1 L9 5" stroke="#222" stroke-width="1.2" fill="none"/></svg>
<svg style="left:836px;top:521px" width="13" height="10" viewBox="0 0 13 10"><path d="M1.2 1 V4" stroke="#222" stroke-width="1.2"/><rect x="0.5" y="3" width="2.5" height="3" fill="#222"/><rect x="3.6" y="2.6" width="8.6" height="6" stroke="#222" stroke-width="1.1" fill="none"/><rect x="4.8" y="3.8" width="6.2" height="3.6" fill="#222"/></svg>
<svg style="left:855px;top:521px" width="11" height="11" viewBox="0 0 11 11"><path d="M0.8 10.5 A9.5 9.5 0 0 1 10 1 M3 10.5 A7.3 7.3 0 0 1 10 3.3 M5.2 10.5 A5 5 0 0 1 10 5.6" stroke="#444" stroke-width="1" fill="none"/><circle cx="8.6" cy="9.2" r="1.3" fill="#222"/></svg>
<svg style="left:869.5px;top:521.5px" width="12" height="10" viewBox="0 0 12 10"><path d="M0.8 3.3 H2.8 L5.8 0.8 V9.2 L2.8 6.7 H0.8Z" stroke="#222" stroke-width="1.1" fill="none"/><path d="M7.5 3.2 Q8.6 5 7.5 6.8 M9.4 1.8 Q11.4 5 9.4 8.2" stroke="#222" stroke-width="1" fill="none"/></svg>
<div class="t" style="left:889.5px;top:521.31px;font-size:9.2px;line-height:9.2px;color:#222;transform-origin:0 0;transform:scaleX(0.8305);-webkit-text-stroke:0.15px #222;">РУС</div>
<div class="t" style="left:923.5px;top:515.38px;font-size:9px;line-height:9px;color:#222;transform-origin:0 0;transform:scaleX(0.8569);-webkit-text-stroke:0.15px #222;">13:19</div>
<div class="t" style="left:914.3px;top:527.88px;font-size:9px;line-height:9px;color:#222;transform-origin:0 0;transform:scaleX(0.8563);-webkit-text-stroke:0.15px #222;">15.11.2025</div>
</body></html>
